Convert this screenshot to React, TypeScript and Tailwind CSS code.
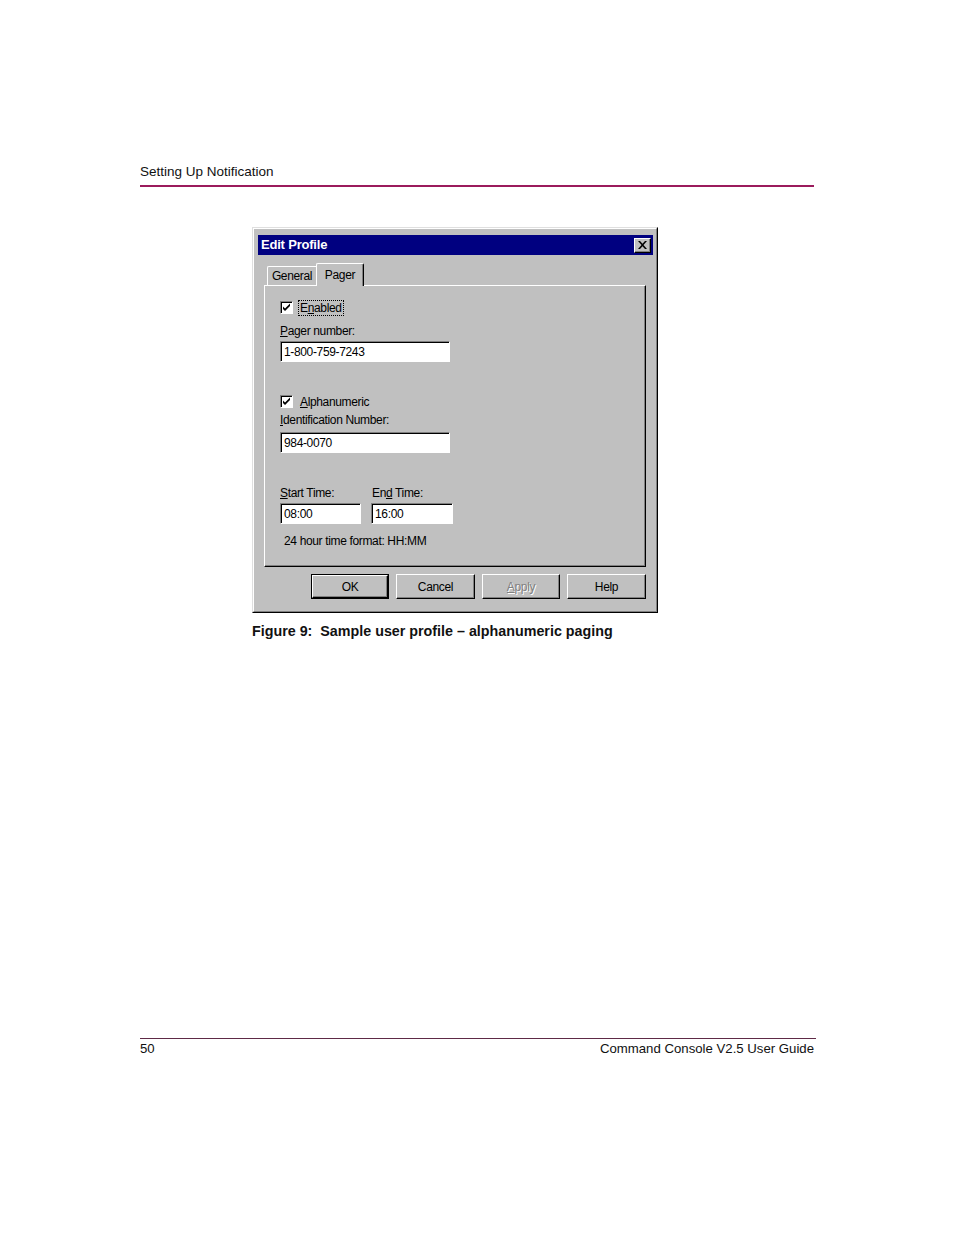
import React from "react";

const dlgFont = { fontFamily: '"Liberation Sans", Arial, sans-serif' };

function CheckBox() {
    return (
        <span className="w-[13px] h-[13px] bg-white border-t border-l border-[#808080] border-r border-b border-r-white border-b-white shadow-[inset_1px_1px_0_#000] flex items-center justify-center">
            <svg width="9" height="9" viewBox="0 0 9 9">
                <path d="M1 3.5 L3 5.5 L8 0.5 L8 3 L3 8 L1 6 Z" fill="#000" />
            </svg>
        </span>
    );
}

function TextBox({ value, width }: { value: string, width: string }) {
    return (
        <div className={`${width} h-[21px] bg-white border-t border-l border-[#808080] border-r border-b border-r-white border-b-white shadow-[inset_1px_1px_0_#000] flex items-center pl-[3px] text-[12px] tracking-[-0.35px] text-black`}>
            {value}
        </div>
    );
}

function DlgButton({ label, width, isDefault, disabled }: { label: React.ReactNode, width: string, isDefault?: boolean, disabled?: boolean }) {
    return (
        <div className={`${width} h-[25px] ${isDefault ? "border border-black" : ""}`}>
            <div className="w-full h-full bg-[#c0c0c0] border-t border-l border-white border-r border-b border-r-black border-b-black shadow-[inset_-1px_-1px_0_#808080] flex items-center justify-center text-[12px] tracking-[-0.35px]">
                {disabled ? (
                    <span className="text-[#808080] [text-shadow:1px_1px_0_#fff]">{label}</span>
                ) : (
                    <span className="text-black">{label}</span>
                )}
            </div>
        </div>
    );
}

function EditProfileDialog() {
    return (
        <div className="w-[406px] h-[386px] bg-[#c0c0c0] border-t border-l border-[#dfdfdf] border-r border-b border-r-black border-b-black" style={dlgFont}>
            <div className="w-full h-full border-t border-l border-white border-r border-b border-r-[#808080] border-b-[#808080] pt-[6px] pl-[4px] pr-[3px]">
                <div className="h-[20px] bg-[#000080] flex items-center justify-between pl-[3px] pr-[2px]">
                    <span className="text-white font-bold text-[13px] tracking-[-0.2px]">Edit Profile</span>
                    <span className="w-[17px] h-[15px] bg-[#c0c0c0] border-t border-l border-white border-r border-b border-r-black border-b-black shadow-[inset_-1px_-1px_0_#808080] flex items-center justify-center">
                        <svg width="9" height="8" viewBox="0 0 9 8">
                            <path d="M0 0 H2 L4.5 2.8 L7 0 H9 L5.5 4 L9 8 H7 L4.5 5.2 L2 8 H0 L3.5 4 Z" fill="#000" />
                        </svg>
                    </span>
                </div>

                <div className="pl-[6px] pr-[7px] mt-[8px]">
                    <div className="h-[22px] flex items-end pl-[3px] relative z-10">
                        <div className="w-[50px] h-[19px] border-t border-l border-white border-r border-r-[#808080] rounded-tl-[2px] flex items-center justify-center text-[12px] tracking-[-0.35px] text-black">
                            General
                        </div>
                        <div className="w-[48px] h-[23px] -mb-[1px] -ml-[1px] bg-[#c0c0c0] border-t border-l border-white border-r border-r-black shadow-[inset_-1px_0_0_#808080] rounded-t-[2px] flex items-start justify-center pt-[2px] text-[12px] tracking-[-0.35px] text-black">
                            Pager
                        </div>
                    </div>
                    <div className="h-[282px] border-t border-l border-white border-r border-b border-r-black border-b-black shadow-[inset_-1px_-1px_0_#808080] pl-[15px] pt-[15px] text-[12px] tracking-[-0.35px] text-black">
                        <div className="h-[13px] flex items-center">
                            <CheckBox />
                            <span className="ml-[5px] px-[1px] leading-[14px] border border-dotted border-black">
                                E<span className="underline">n</span>abled
                            </span>
                        </div>
                        <div className="mt-[10px] h-[14px] leading-[14px]">
                            <span className="underline">P</span>ager number:
                        </div>
                        <div className="mt-[3px]">
                            <TextBox value="1-800-759-7243" width="w-[170px]" />
                        </div>

                        <div className="mt-[33px] h-[13px] flex items-center">
                            <CheckBox />
                            <span className="ml-[7px] leading-[14px]">
                                <span className="underline">A</span>lphanumeric
                            </span>
                        </div>
                        <div className="mt-[5px] h-[14px] leading-[14px]">
                            <span className="underline">I</span>dentification Number:
                        </div>
                        <div className="mt-[5px]">
                            <TextBox value="984-0070" width="w-[170px]" />
                        </div>

                        <div className="mt-[33px] flex gap-[10px]">
                            <div className="w-[81px]">
                                <div className="h-[14px] leading-[14px]">
                                    <span className="underline">S</span>tart Time:
                                </div>
                                <div className="mt-[3px]">
                                    <TextBox value="08:00" width="w-[81px]" />
                                </div>
                            </div>
                            <div className="w-[82px]">
                                <div className="h-[14px] leading-[14px] pl-[1px]">
                                    En<span className="underline">d</span> Time:
                                </div>
                                <div className="mt-[3px]">
                                    <TextBox value="16:00" width="w-[82px]" />
                                </div>
                            </div>
                        </div>
                        <div className="mt-[10px] h-[14px] leading-[14px] pl-[4px]">
                            24 hour time format: HH:MM
                        </div>
                    </div>

                    <div className="mt-[7px] flex justify-end gap-[7px]">
                        <DlgButton label="OK" width="w-[78px]" isDefault />
                        <DlgButton label="Cancel" width="w-[79px]" />
                        <DlgButton label={<><span className="underline">A</span>pply</>} width="w-[78px]" disabled />
                        <DlgButton label="Help" width="w-[79px]" />
                    </div>
                </div>
            </div>
        </div>
    );
}

export default function App() {
    return (
        <div className="w-[954px] h-[1235px] bg-white text-black" style={{ fontFamily: '"Liberation Sans", Arial, sans-serif' }}>
            <div className="pt-[164px] pl-[140px]">
                <div className="w-[674px]">
                    <div className="h-[16px] leading-[16px] text-[13.5px] text-[#111]">Setting Up Notification</div>
                    <div className="mt-[5px] h-[2px] bg-[#9b1b5c]"></div>
                </div>

                <div className="mt-[40px] ml-[112px]">
                    <EditProfileDialog />
                </div>

                <div className="ml-[112px] mt-[10px] h-[16px] leading-[16px] text-[14.3px] font-bold text-[#111] whitespace-pre">
                    Figure 9:  Sample user profile – alphanumeric paging
                </div>

                <div className="w-[676px] mt-[399px] h-[1px] bg-[#5e2a46]"></div>
                <div className="w-[674px] mt-[2px] h-[16px] leading-[16px] text-[13.2px] text-[#111] flex justify-between">
                    <span>50</span>
                    <span>Command Console V2.5 User Guide</span>
                </div>
            </div>
        </div>
    );
}
